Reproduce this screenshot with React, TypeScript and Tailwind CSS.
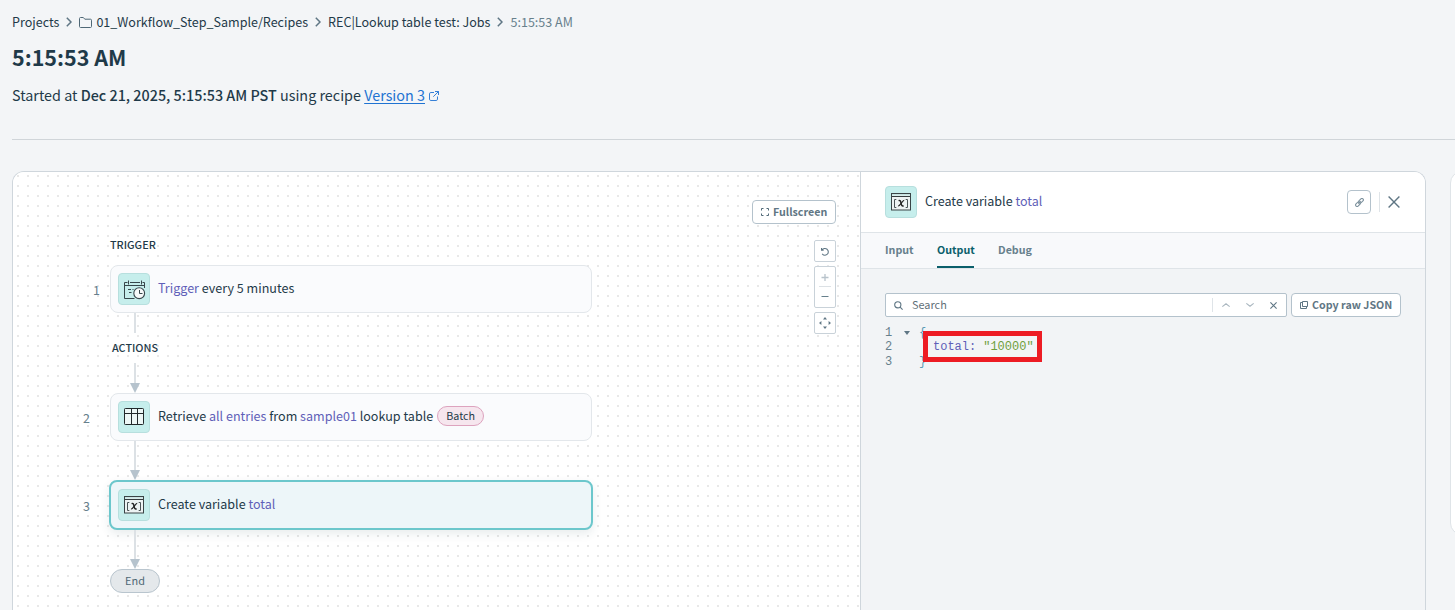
import type { ReactNode } from 'react';
import clsx from 'clsx';

function Crumb({ children, last }: { children: ReactNode; last?: boolean }) {
  return (
    <>
      <span className={clsx('whitespace-pre', last ? 'text-[#67808c]' : 'text-[#1f3a49]')}>{children}</span>
      {!last && (
        <svg width="6" height="10" viewBox="0 0 6 10" fill="none" stroke="#5f7684" strokeWidth="1.5" className="mx-[7px] shrink-0">
          <path d="M0.8 0.8L5 5L0.8 9.2" />
        </svg>
      )}
    </>
  );
}

function VariableIcon() {
  return (
    <svg width="20" height="18" viewBox="0 0 20 18" fill="none">
      <rect x="0.5" y="0.5" width="19" height="16.5" fill="#edf3f3" stroke="#3a4446" />
      <path d="M1 1.8H19" stroke="#c5e3e1" strokeWidth="1.4" />
      <path d="M1 3.5H19" stroke="#333b3d" />
      <path d="M5.3 6.5H3.5V14.5H5.3M14.7 6.5H16.5V14.5H14.7" stroke="#4a5456" />
      <path d="M7.6 7.6C9.6 6.8 9.7 8.6 10.1 10.4C10.5 12.3 11 13.4 12.6 12.8" stroke="#222" strokeWidth="1.5" />
      <path d="M13.2 7.4C11.6 7.2 8.8 13.4 7 13" stroke="#222" strokeWidth="1.2" />
    </svg>
  );
}

function CalendarIcon() {
  return (
    <svg width="22" height="20" viewBox="0 0 22 20" fill="none" stroke="#37474b" className="-mb-px ml-px">
      <path d="M3.5 2.5H0.5V18.5H10.5M18.5 2.5H20.5V8M6 2.5H16" />
      <path d="M0.5 5.5H20.5" />
      <path d="M4.5 0.5V4.5M17.5 0.5V4.5" />
      <path d="M4 9.5H7M8.5 9.5H9.5M5 12.5H7.5" />
      <circle cx="15.2" cy="13.2" r="5.4" fill="#f6f9f9" strokeWidth="1.1" />
      <path d="M15.5 10V13.5H18.5" />
    </svg>
  );
}

function TableIcon() {
  return (
    <svg width="20" height="18" viewBox="0 0 20 18" fill="none" stroke="#22292b">
      <rect x="0.5" y="0.5" width="19" height="16" rx="0.8" fill="#edf7f6" />
      <path d="M1 5.5H19M7.5 1V16M13.5 1V16" />
    </svg>
  );
}

function IconTile({ children }: { children: ReactNode }) {
  return (
    <div className="flex size-8 shrink-0 items-center justify-center rounded border border-[#b7dfde] bg-[#c6eeec]">
      {children}
    </div>
  );
}

function Hl({ children }: { children: ReactNode }) {
  return <span className="text-[#5f5fb8]">{children}</span>;
}

function Connector({ height, arrow }: { height: number; arrow?: boolean }) {
  return (
    <div className="ml-[20px] flex w-[10px] flex-col items-center" style={{ height }}>
      <div className="w-[2px] flex-1 bg-[#dce1e5]" />
      {arrow && (
        <svg width="10" height="10" viewBox="0 0 10 10" fill="#b6c3cd">
          <path d="M0 0H10L5 10Z" />
        </svg>
      )}
    </div>
  );
}

function Step({ index, icon, active, children }: { index: number; icon: ReactNode; active?: boolean; children: ReactNode }) {
  return (
    <div className="-ml-[30px] flex items-center">
      <span
        className={clsx(
          'shrink-0 pt-px text-right text-[12.5px] leading-4 text-[#67808c]',
          index === 1 ? 'w-5' : 'mr-[10px] w-[10px]',
        )}
      >
        {index}
      </span>
      <div
        className={clsx(
          'flex items-center px-[7px]',
          active
            ? '-mr-px ml-[9px] h-[50px] w-[484px] rounded-lg border-2 border-[#6cc7cc] bg-[#edf6f9] shadow-[0_4px_10px_rgba(40,80,90,0.1)]'
            : 'ml-[10px] h-12 w-[482px] rounded-lg border border-[#e3e7eb] bg-[#fafbfd]',
        )}
      >
        <IconTile>{icon}</IconTile>
        <p className="mb-[2px] ml-2 flex items-center text-[12.55px] leading-5 whitespace-pre text-[#1f3a49]">{children}</p>
      </div>
    </div>
  );
}

function Toolbar() {
  const box = 'flex w-[22px] items-center justify-center rounded-[2px] border border-[#c9d2d9] bg-white';
  return (
    <div className="absolute top-[28px] right-[24px] flex flex-col items-end text-[#5f7684]">
      <button className="flex h-6 w-[84px] items-center rounded border border-[#b4c2cc] bg-white pl-2 text-[10.7px] font-bold">
        <svg width="8" height="8" viewBox="0 0 8 8" fill="none" stroke="#4f6876" className="mr-[4px]">
          <path d="M0.5 2.5V0.5H2.5M5.5 0.5H7.5V2.5M7.5 5.5V7.5H5.5M2.5 7.5H0.5V5.5" />
        </svg>
        Fullscreen
      </button>
      <button className={clsx(box, 'mt-4 h-[22px]')}>
        <svg width="8" height="9" viewBox="0 0 9 10" fill="none" stroke="currentColor" strokeWidth="1.2">
          <path d="M0.6 1.2V3.5H3M0.9 3.4C2.5 1.3 5.2 1.1 6.9 2.5C8.7 4.1 8.6 6.9 6.8 8.2C5.2 9.4 2.7 9.1 1.3 7.6" />
        </svg>
      </button>
      <div className={clsx(box, 'mt-1 h-[42px] flex-col')}>
        <svg width="8" height="8" viewBox="0 0 8 8" stroke="#b8c3cb" strokeWidth="1.3">
          <path d="M0.5 3.5H7.5M4 0V7" />
        </svg>
        <div className="mt-[4px] mb-[6px] h-px w-3 bg-[#dce1e5]" />
        <svg width="8" height="8" viewBox="0 0 8 8" stroke="#67808c">
          <path d="M0.5 3.5H7.5" />
        </svg>
      </div>
      <button className={clsx(box, 'mt-1 h-[22px]')}>
        <svg width="12" height="12" viewBox="0 0 12 12" fill="#5f7684">
          <path d="M6 0L8 2.4H4ZM6 12L4 9.6H8ZM0 6L2.4 4V8ZM12 6L9.6 8V4Z" />
        </svg>
      </button>
    </div>
  );
}

function Canvas() {
  return (
    <div className="relative w-[847px] shrink-0 bg-white bg-[radial-gradient(#e8e8e8_1px,transparent_1px)] bg-[length:10px_10px] bg-[position:0_-1px] pt-[62px] pl-[97px]">
      <h2 className="h-[31px] text-[10.8px] leading-5 font-medium text-[#1f3a49]">TRIGGER</h2>
      <Step index={1} icon={<CalendarIcon />}>
        <Hl>Trigger</Hl> every 5 minutes
      </Step>
      <Connector height={20} />
      <h2 className="h-[30px] pt-1 pl-[2px] text-[10.8px] leading-5 font-medium text-[#1f3a49]">ACTIONS</h2>
      <Connector height={30} arrow />
      <Step index={2} icon={<TableIcon />}>
        Retrieve <Hl>all entries</Hl> from <Hl>sample01</Hl> lookup table
        <span className="ml-1 flex h-5 w-[47px] items-center justify-center rounded-full border border-[#dda3be] bg-[#f6e6ee] text-[10.75px]">
          Batch
        </span>
      </Step>
      <Connector height={39} arrow />
      <Step index={3} icon={<VariableIcon />} active>
        Create variable <Hl>total</Hl>
      </Step>
      <Connector height={39} arrow />
      <div className="flex h-6 w-[50px] items-center justify-center rounded-full border border-[#b9c5ce] bg-[#e4e8eb] pb-[2px] text-[10.9px] text-[#4f6876]">
        End
      </div>
      <Toolbar />
    </div>
  );
}

function Details() {
  return (
    <section className="flex flex-1 flex-col border-l border-[#cfd6dc] bg-[#f2f4f6]">
      <header className="flex h-[61px] shrink-0 items-center border-b border-[#dfe4e8] bg-white pr-[24px] pl-6">
        <IconTile>
          <VariableIcon />
        </IconTile>
        <h2 className="mb-[2px] ml-2 flex-1 text-[12.55px] leading-5 whitespace-pre text-[#1f3a49]">
          Create variable <Hl>total</Hl>
        </h2>
        <button className="flex size-6 items-center justify-center rounded border border-[#b4c2cc]">
          <svg width="9" height="9" viewBox="0 0 10 10" fill="none" stroke="#7d919d" strokeWidth="1.2">
            <rect x="3.7" y="1.5" width="6" height="3.2" rx="1.6" transform="rotate(-45 6.7 3.1)" />
            <rect x="0.3" y="5.2" width="6" height="3.2" rx="1.6" transform="rotate(-45 3.3 6.8)" />
            <path d="M3.6 6.3L6.3 3.6" />
          </svg>
        </button>
        <div className="mx-2 h-5 w-px bg-[#dfe4e8]" />
        <svg width="12" height="12" viewBox="0 0 12 12" stroke="#5f7684" strokeWidth="1.4" className="mr-[1px]">
          <path d="M0.6 0.6L11.4 11.4M11.4 0.6L0.6 11.4" />
        </svg>
      </header>
      <nav className="flex h-9 shrink-0 gap-6 border-b border-[#dfe4e8] bg-[#f8f9fb] pl-6 text-[10.7px] leading-[33px] font-bold text-[#67808c]">
        <a className="w-7">Input</a>
        <a className="h-[35px] w-[37px] border-b-2 border-[#0b5f6b] text-[#0b5f6b]">Output</a>
        <a>Debug</a>
      </nav>
      <div className="flex gap-1 pt-6 pl-6">
        <div className="flex h-6 w-[402px] items-center rounded-[2px] border border-[#b4c2cc] bg-white pl-2 text-[10.9px] text-[#5f6f78]">
          <svg width="9" height="9" viewBox="0 0 9 9" fill="none" stroke="#5f7684" strokeWidth="1.1">
            <circle cx="3.8" cy="3.8" r="3.1" />
            <path d="M6.1 6.1L8.6 8.6" />
          </svg>
          <span className="mb-[2px] ml-[9px] flex-1">Search</span>
          <div className="h-[14px] w-px bg-[#dfe4e8]" />
          <svg width="8" height="4" viewBox="0 0 8 4" fill="none" stroke="#a9b6bf" strokeWidth="1.1" className="ml-[9px]">
            <path d="M0.3 3.6L4 0.7L7.7 3.6" />
          </svg>
          <svg width="8" height="4" viewBox="0 0 8 4" fill="none" stroke="#a9b6bf" strokeWidth="1.1" className="ml-4">
            <path d="M0.3 0.4L4 3.3L7.7 0.4" />
          </svg>
          <svg width="7" height="7" viewBox="0 0 7 7" stroke="#5f7684" strokeWidth="1.1" className="mr-[9px] ml-[16px]">
            <path d="M0.4 0.4L6.6 6.6M6.6 0.4L0.4 6.6" />
          </svg>
        </div>
        <button className="flex h-6 w-[110px] items-center rounded border border-[#b4c2cc] bg-white pl-2 text-[10.7px] font-bold whitespace-nowrap text-[#5f7684]">
          <svg width="8" height="8" viewBox="0 0 8 8" fill="none" stroke="#5f7684" className="mr-1 shrink-0">
            <path d="M2.5 0.5H7.5V5.5H2.5ZM2 1.5H0.5V7.5H6.5V6" />
          </svg>
          Copy raw JSON
        </button>
      </div>
      <div className="relative mt-[9px] ml-6 font-['Liberation_Mono',monospace] text-[12px] leading-[14.4px] text-[#67808c]">
        <div className="flex">
          <span className="w-[19px]">1</span>
          <svg width="6" height="4" viewBox="0 0 6 4" fill="#5f7684" className="mt-[5px]">
            <path d="M0 0H6L3 4Z" />
          </svg>
          <span className="ml-[9px] text-[#5b9bb5]">{'{'}</span>
        </div>
        <div className="flex">
          <span className="w-[48px]">2</span>
          <span className="text-[#5f5fb8]">total:</span>
          <span className="ml-[7px] text-[#6f9f3c]">"10000"</span>
        </div>
        <div className="flex">
          <span className="w-[34px]">3</span>
          <span className="text-[#5b9bb5]">{'}'}</span>
        </div>
        {/* highlight frame over the value */}
        <div className="absolute top-[5px] left-[38px] h-[31px] w-[119px] border-[5px] border-[#ed1c24]" />
      </div>
    </section>
  );
}

export default function App() {
  return (
    <div className="flex h-[610px] w-[1455px] flex-col overflow-hidden bg-[#f3f5f7] font-['Noto_Sans_CJK_SC',sans-serif] text-[#1f3a49]">
      <header className="ml-3 flex h-[140px] shrink-0 flex-col border-b border-[#d0d5d9]">
        <nav className="mt-3 flex h-5 items-center text-[12.55px]">
          <Crumb>Projects</Crumb>
          <svg width="13" height="11" viewBox="0 0 13 11" fill="none" stroke="#4f6876" className="mr-[4px]">
            <path d="M0.5 1.5C0.5 0.9 0.9 0.5 1.5 0.5H4.3L5.8 2.2H11.5C12.1 2.2 12.5 2.6 12.5 3.2V9.5C12.5 10.1 12.1 10.5 11.5 10.5H1.5C0.9 10.5 0.5 10.1 0.5 9.5Z" />
          </svg>
          <Crumb>01_Workflow_Step_Sample/Recipes</Crumb>
          <Crumb>REC|Lookup table test: Jobs</Crumb>
          <Crumb last>5:15:53 AM</Crumb>
        </nav>
        <h1 className="mt-[9px] text-[21.5px] leading-8 font-bold">5:15:53 AM</h1>
        <p className="mt-[10px] flex items-center text-[14.36px] leading-6 whitespace-pre">
          Started at <b className="font-medium">Dec 21, 2025, 5:15:53 AM PST</b> using recipe{' '}
          <a className="text-[#1f73d2] underline underline-offset-2">Version 3</a>
          <svg width="10" height="10" viewBox="0 0 10 10" fill="none" stroke="#1f73d2" strokeWidth="0.9" className="mt-[2px] ml-1">
            <path d="M5 1.5H1.8C1 1.5 0.5 2 0.5 2.8V8.2C0.5 9 1 9.5 1.8 9.5H7.2C8 9.5 8.5 9 8.5 8.2V5.5M6 0.5H9.5V4M9.5 0.5L4.3 5.7" />
          </svg>
        </p>
      </header>
      <div className="mt-[31px] ml-3 flex flex-1 gap-6">
        <main className="flex w-[1414px] shrink-0 overflow-hidden rounded-t-xl border border-b-0 border-[#cfd6dc]">
          <Canvas />
          <Details />
        </main>
        <aside className="h-[364px] w-10 shrink-0 rounded-xl border border-[#dfe4e8] bg-white" />
      </div>
    </div>
  );
}
